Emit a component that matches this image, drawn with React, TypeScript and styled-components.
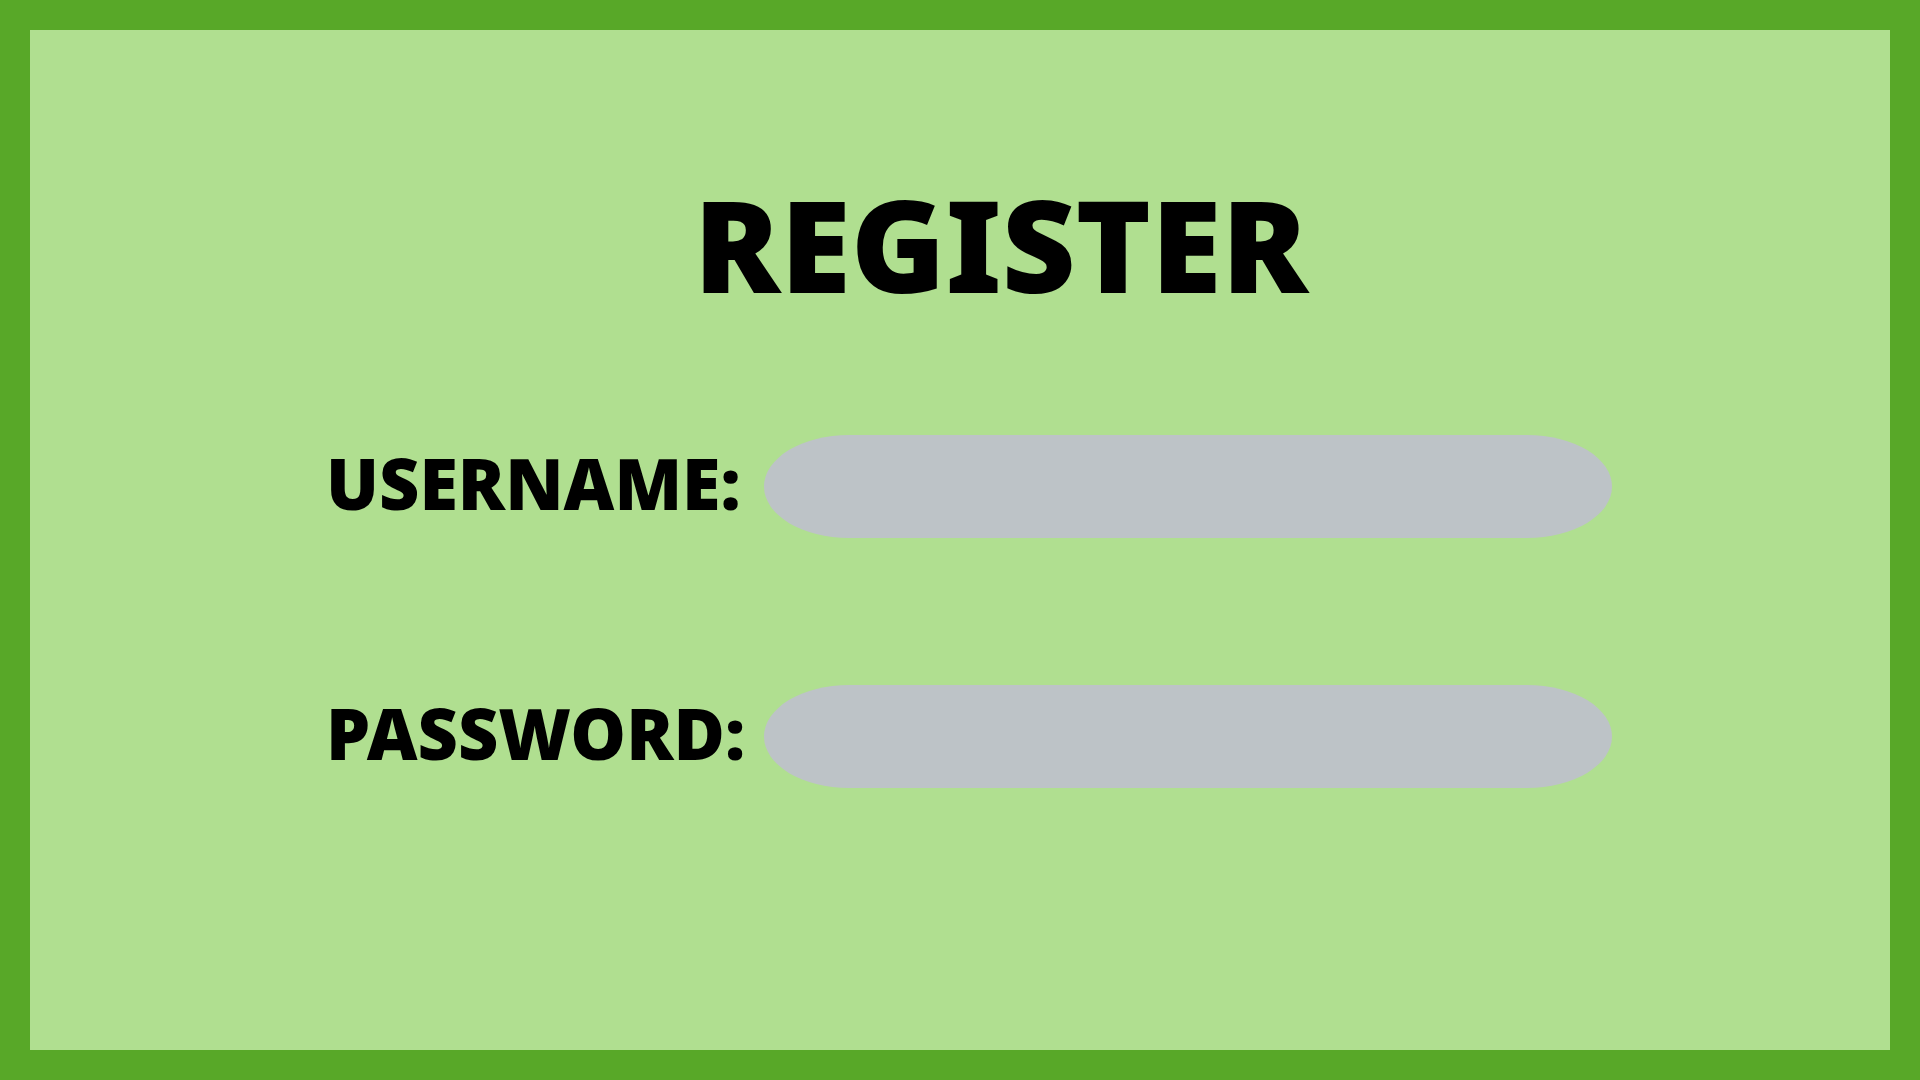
import React from "react";
import styled, { createGlobalStyle } from "styled-components";

const GlobalStyle = createGlobalStyle`
  *, *::before, *::after { box-sizing: border-box; }
  body {
    margin: 0;
    font-family: "Noto Sans", sans-serif;
    font-weight: 900;
    color: #000;
  }
`;

const Page = styled.main`
  min-height: 100vh;
  border: 30px solid #58a828;
  background: #b0df90;
  padding: 142px 278px 120px 296px;
`;

const Title = styled.h1`
  margin: 0 0 119px;
  padding-left: 64px;
  font-size: 128px;
  font-weight: inherit;
  line-height: 144px;
  text-align: center;
`;

const Form = styled.form`
  display: flex;
  flex-direction: column;
  gap: 147px;
`;

const Row = styled.div`
  display: grid;
  grid-template-columns: 438px 1fr;
  align-items: center;
`;

const Label = styled.label`
  padding-bottom: 8px;
  font-size: 70px;
  line-height: 80px;
  white-space: nowrap;
`;

const Input = styled.input`
  width: 100%;
  min-width: 0;
  height: 103px;
  padding: 0 80px;
  border: 0;
  border-radius: 10% / 50%;
  background: #bdc3c7;
  color: inherit;
  font: inherit;
  font-size: 40px;

  &:focus-visible {
    outline: 4px solid #58a828;
  }
`;

interface FieldProps {
  id: string;
  label: string;
  type: string;
  autoComplete: string;
}

function Field({ id, label, type, autoComplete }: FieldProps) {
  return (
    <Row>
      <Label htmlFor={id}>{label}</Label>
      <Input id={id} name={id} type={type} autoComplete={autoComplete} />
    </Row>
  );
}

export default function App() {
  return (
    <>
      <GlobalStyle />
      <Page>
        <Title>REGISTER</Title>
        <Form>
          <Field id="username" label="USERNAME:" type="text" autoComplete="username" />
          <Field id="password" label="PASSWORD:" type="password" autoComplete="new-password" />
        </Form>
      </Page>
    </>
  );
}
